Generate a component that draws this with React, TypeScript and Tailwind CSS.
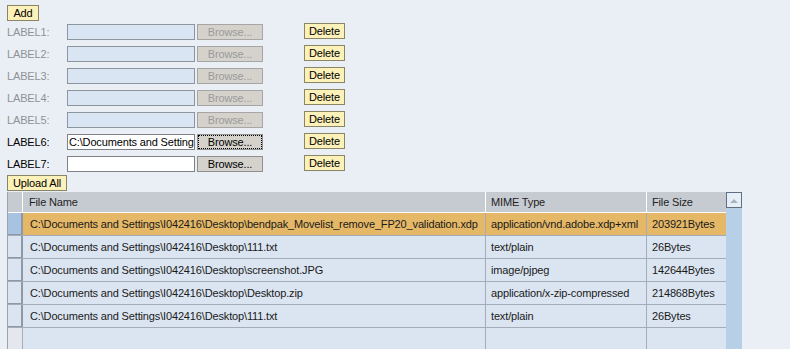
import React from "react";

const font = { fontFamily: '"Liberation Sans", Arial, sans-serif' };

function YBtn({ children, className = "" }: { children: React.ReactNode; className?: string }) {
  return (
    <div
      className={
        "h-[16px] border border-[#8a8564] bg-[#fcf1b9] leading-[14px] text-black flex items-center justify-center " +
        className
      }
    >
      {children}
    </div>
  );
}

const rows = [
  { label: "LABEL1:", enabled: false, value: "" },
  { label: "LABEL2:", enabled: false, value: "" },
  { label: "LABEL3:", enabled: false, value: "" },
  { label: "LABEL4:", enabled: false, value: "" },
  { label: "LABEL5:", enabled: false, value: "" },
  { label: "LABEL6:", enabled: true, value: "C:\\Documents and Settings\\I042416\\Desktop\\screenshot.JPG", focus: true },
  { label: "LABEL7:", enabled: true, value: "" },
];

const files = [
  ["C:\\Documents and Settings\\I042416\\Desktop\\bendpak_Movelist_remove_FP20_validation.xdp", "application/vnd.adobe.xdp+xml", "203921Bytes"],
  ["C:\\Documents and Settings\\I042416\\Desktop\\111.txt", "text/plain", "26Bytes"],
  ["C:\\Documents and Settings\\I042416\\Desktop\\screenshot.JPG", "image/pjpeg", "142644Bytes"],
  ["C:\\Documents and Settings\\I042416\\Desktop\\Desktop.zip", "application/x-zip-compressed", "214868Bytes"],
  ["C:\\Documents and Settings\\I042416\\Desktop\\111.txt", "text/plain", "26Bytes"],
];

export default function App() {
  return (
    <div className="w-[790px] h-[349px] overflow-hidden bg-[#eaeff5] text-[11px] tracking-[-0.15px]" style={font}>
      <div className="pl-[7px] pt-[5px] flex flex-col">
        <YBtn className="w-[32px]">Add</YBtn>
        <div className="flex flex-col gap-[6px] mt-[3px]">
          {rows.map((r, i) => (
            <div key={i} className="flex items-center h-[16px]">
              <div className={"w-[60px] " + (r.enabled ? "text-black" : "text-[#8e9296]")}>{r.label}</div>
              <div
                className={
                  "w-[128px] h-[16px] border overflow-hidden whitespace-nowrap pl-[1px] leading-[14px] " +
                  (r.enabled ? "bg-white border-[#7e8287]" : "bg-[#dae5f3] border-[#8e959c]")
                }
              >
                {r.value}
              </div>
              <div
                className={
                  "ml-[2px] w-[66px] h-[16px] border flex items-center justify-center leading-[14px] " +
                  (r.enabled
                    ? "bg-[#d5d2cc] border-[#8f8f8f] text-black"
                    : "bg-[#d5d2cc] border-[#a6a6a6] text-[#9a9a9a]")
                }
              >
                {r.focus ? (
                  <div className="border border-dotted border-black w-[64px] h-[14px] flex items-center justify-center">
                    Browse...
                  </div>
                ) : (
                  "Browse..."
                )}
              </div>
              <YBtn className="ml-[41px] w-[41px] -mt-[2px]">Delete</YBtn>
            </div>
          ))}
        </div>
        <YBtn className="w-[60px] mt-[3px]">Upload All</YBtn>
        <div className="flex mt-[1px]">
          <div className="flex flex-col w-[719px] border-l border-[#9aa2ac]">
            <div className="grid grid-cols-[15px_463px_161px_79px] h-[20px] bg-[#c6cbd2] text-[#222]">
              <div className="border-r border-white" />
              <div className="pl-[6px] flex items-center border-r border-white">File Name</div>
              <div className="pl-[5px] flex items-center border-r border-white">MIME Type</div>
              <div className="pl-[5px] flex items-center">File Size</div>
            </div>
            {files.map((f, i) => {
              const sel = i === 0;
              return (
                <div
                  key={i}
                  className={
                    "grid grid-cols-[15px_463px_161px_79px] h-[23px] border-t " +
                    (sel ? "bg-[#e5b868] border-white" : "bg-[#dbe5f1] border-[#a3acb8]")
                  }
                >
                  <div
                    className={
                      "border-r-2 border-b border-[#8f99a6] " + (sel ? "bg-[#a8c3e2]" : "bg-[#dbe5f1]")
                    }
                  />
                  <div className="pl-[7px] flex items-center whitespace-nowrap overflow-hidden border-r border-[#a3acb8] text-[#1a1a1a]">
                    {f[0]}
                  </div>
                  <div className="pl-[5px] flex items-center whitespace-nowrap overflow-hidden border-r border-[#a3acb8] text-[#1a1a1a]">
                    {f[1]}
                  </div>
                  <div className="pl-[5px] flex items-center whitespace-nowrap overflow-hidden text-[#1a1a1a]">
                    {f[2]}
                  </div>
                </div>
              );
            })}
            <div className="grid grid-cols-[15px_463px_161px_79px] h-[30px] border-t border-[#a3acb8] bg-[#dbe5f1]">
              <div className="bg-[#e4e8ee] border-r border-[#a3acb8]" />
              <div className="border-r border-[#a3acb8]" />
              <div className="border-r border-[#a3acb8]" />
              <div />
            </div>
          </div>
          <div className="w-[16px] bg-[#b8cfe8] flex flex-col">
            <div className="h-[16px] w-[16px] border border-[#5e6f84] bg-[#e8eef6] flex items-center justify-center">
              <svg width="8" height="5" viewBox="0 0 8 5">
                <path d="M0 5 L4 1 L8 5 Z" fill="#a9b3bf" />
              </svg>
            </div>
          </div>
        </div>
      </div>
    </div>
  );
}
